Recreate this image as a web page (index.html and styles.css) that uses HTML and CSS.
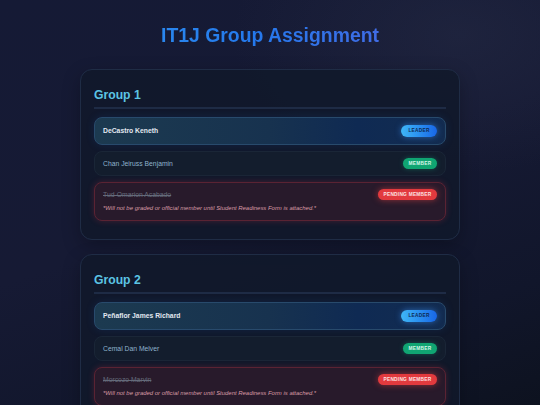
FILE: index.html
```html
<!DOCTYPE html>
<html lang="en">
<head>
<meta charset="utf-8">
<title>IT1J Group Assignment</title>
<link rel="stylesheet" href="styles.css">
</head>
<body>
<main class="page">
  <h1 class="title">IT1J Group Assignment</h1>

  <section class="card">
    <h2 class="group-title">Group 1</h2>
    <ul class="members">
      <li class="row row-leader">
        <span class="name">DeCastro Keneth</span>
        <span class="badge badge-leader">Leader</span>
      </li>
      <li class="row row-member">
        <span class="name">Chan Jeiruss Benjamin</span>
        <span class="badge badge-member">Member</span>
      </li>
      <li class="row row-pending">
        <div class="pending-head">
          <span class="name">Tud-Omarion Acabado</span>
          <span class="badge badge-pending">Pending Member</span>
        </div>
        <p class="note">*Will not be graded or official member until Student Readiness Form is attached.*</p>
      </li>
    </ul>
  </section>

  <section class="card">
    <h2 class="group-title">Group 2</h2>
    <ul class="members">
      <li class="row row-leader">
        <span class="name">Peñaflor James Richard</span>
        <span class="badge badge-leader">Leader</span>
      </li>
      <li class="row row-member">
        <span class="name">Cemal Dan Melver</span>
        <span class="badge badge-member">Member</span>
      </li>
      <li class="row row-pending">
        <div class="pending-head">
          <span class="name">Morcozo Marvin</span>
          <span class="badge badge-pending">Pending Member</span>
        </div>
        <p class="note">*Will not be graded or official member until Student Readiness Form is attached.*</p>
      </li>
    </ul>
  </section>
</main>
</body>
</html>
```

FILE: styles.css
```css
* { box-sizing: border-box; }

html, body {
  margin: 0;
  padding: 0;
}

body {
  min-height: 100vh;
  font-family: "Liberation Sans", Arial, sans-serif;
  color: #cfd8e6;
  background:
    radial-gradient(ellipse 60% 45% at 85% 8%, rgba(40, 46, 72, 0.45), rgba(40, 46, 72, 0) 70%),
    linear-gradient(160deg, #151a35 0%, #161a34 45%, #11162b 75%, #0c111c 100%);
  overflow: hidden;
}

.page {
  width: 380px;
  margin: 0 auto;
  padding-top: 22px;
}

.title {
  margin: 0 0 21px;
  text-align: center;
  font-size: 19.4px;
  line-height: 26px;
  font-weight: 700;
  background: linear-gradient(90deg, #2f93f0 0%, #2479ec 45%, #3c6ee6 75%, #5d62e2 100%);
  -webkit-background-clip: text;
  background-clip: text;
  color: transparent;
}

.card {
  background: rgba(17, 25, 42, 0.85);
  border: 1px solid #1f2c45;
  border-radius: 12px;
  padding: 15px 13px 18px;
  margin-bottom: 14px;
  box-shadow: 0 6px 18px rgba(0, 0, 0, 0.25);
}

.group-title {
  margin: 0;
  font-size: 12.2px;
  line-height: 14px;
  font-weight: 700;
  color: #5cc4e4;
  padding: 3px 0 5px;
  border-bottom: 2px solid #1e2b45;
}

.members {
  list-style: none;
  margin: 8px 0 0;
  padding: 0;
  display: flex;
  flex-direction: column;
  gap: 6px;
}

.row {
  border-radius: 8px;
  padding: 0 8px;
  border: 1px solid transparent;
}

.row-leader {
  display: flex;
  align-items: center;
  justify-content: space-between;
  height: 28px;
  background: linear-gradient(90deg, #1c3a50 0%, #17324f 50%, #0f2a53 75%, #132c50 100%);
  border-color: #284a6c;
  box-shadow: 0 0 8px rgba(30, 100, 200, 0.15);
}

.row-member {
  display: flex;
  align-items: center;
  justify-content: space-between;
  height: 25px;
  background: #131d2d;
  border-color: #1a2637;
}

.row-pending {
  height: 39px;
  padding-top: 6px;
  background: #281a2b;
  border-color: #5a2333;
  box-shadow: 0 0 6px rgba(220, 50, 70, 0.25);
}

.pending-head {
  display: flex;
  align-items: center;
  justify-content: space-between;
}

.name {
  font-size: 6.8px;
  line-height: 10px;
}

.row-leader .name {
  font-weight: 700;
  color: #e2e8f0;
}

.row-member .name {
  color: #8fb2cc;
}

.row-pending .name {
  color: #646a7a;
  text-decoration: line-through;
}

.note {
  margin: 4px 0 0;
  font-size: 5.95px;
  line-height: 8px;
  font-style: italic;
  color: #d99aa6;
}

.badge {
  display: inline-block;
  border-radius: 7px;
  font-size: 4.8px;
  line-height: 11px;
  height: 11px;
  font-weight: 700;
  letter-spacing: 0.25px;
  text-transform: uppercase;
  text-align: center;
}

.badge-leader {
  width: 36px;
  height: 12px;
  line-height: 12px;
  color: #0d2a52;
  background: linear-gradient(90deg, #3fb6f7 0%, #2a90f0 50%, #1866e6 100%);
  box-shadow: 0 0 6px rgba(60, 150, 255, 0.55);
}

.badge-member {
  width: 34px;
  color: #d6f5e8;
  background: #10a572;
  box-shadow: 0 0 5px rgba(16, 185, 129, 0.35);
}

.badge-pending {
  width: 59px;
  color: #fde2e2;
  background: #e23a3e;
  box-shadow: 0 0 6px rgba(239, 68, 68, 0.55);
}
```
